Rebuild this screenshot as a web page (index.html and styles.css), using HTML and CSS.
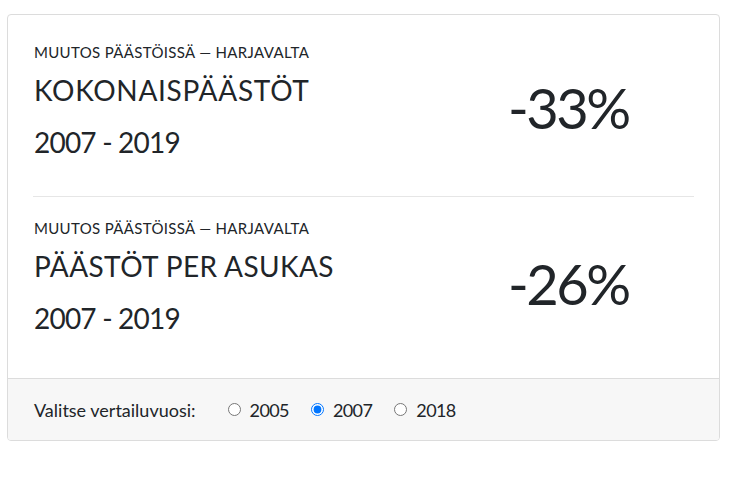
FILE: index.html
```html
<!DOCTYPE html>
<html lang="fi">
<head>
<meta charset="utf-8">
<title>Muutos päästöissä</title>
<link rel="stylesheet" href="styles.css">
</head>
<body>
<div class="page">
  <div class="card">
    <div class="card-body">
      <div class="stat">
        <div class="stat-text">
          <div class="label">MUUTOS PÄÄSTÖISSÄ — HARJAVALTA</div>
          <div class="title">KOKONAISPÄÄSTÖT</div>
          <div class="years">2007 - 2019</div>
        </div>
        <div class="value">-33%</div>
      </div>
      <div class="stat">
        <div class="stat-text">
          <div class="label">MUUTOS PÄÄSTÖISSÄ — HARJAVALTA</div>
          <div class="title">PÄÄSTÖT PER ASUKAS</div>
          <div class="years">2007 - 2019</div>
        </div>
        <div class="value">-26%</div>
      </div>
    </div>
    <div class="card-footer">
      <span class="footer-label">Valitse vertailuvuosi:</span>
      <label class="opt"><input type="radio" name="year" value="2005"> 2005</label>
      <label class="opt"><input type="radio" name="year" value="2007" checked> 2007</label>
      <label class="opt"><input type="radio" name="year" value="2018"> 2018</label>
    </div>
  </div>
</div>
</body>
</html>
```
FILE: styles.css
```css
html, body {
  margin: 0;
  padding: 0;
  background: #fff;
}
body {
  font-family: "Lato", "Open Sans", sans-serif;
  color: #212529;
}
.page {
  padding: 14px 24px 0 7px;
}
.card {
  width: 711px;
  border: 1px solid #dcdcdc;
  border-radius: 4px;
  overflow: hidden;
  background: #fff;
}
.card-body {
  padding: 6px 25px;
}
.stat {
  padding: 22px 0 37px;
  display: grid;
  grid-template-columns: 1fr 186px;
  align-items: center;
}
.stat + .stat {
  border-top: 1px solid #e6e6e6;
}
.stat-text {
  padding-left: 1px;
}
.label {
  font-size: 15px;
  line-height: 18px;
  letter-spacing: 0.33px;
}
.title {
  font-size: 28px;
  line-height: 34px;
  margin-top: 12px;
  letter-spacing: 0.7px;
}
.stat + .stat .title {
  letter-spacing: 0.4px;
}
.years {
  font-size: 28px;
  line-height: 34px;
  margin-top: 18px;
  letter-spacing: -0.8px;
}
.value {
  font-size: 56px;
  line-height: 64px;
  letter-spacing: -2.5px;
  margin-top: 13px;
}
.card-footer {
  height: 62px;
  box-sizing: border-box;
  background: #f7f7f7;
  border-top: 1px solid #dcdcdc;
  padding: 0 26px;
  display: flex;
  align-items: center;
  font-size: 18px;
}
.footer-label {
  margin-right: 32px;
}
.opt {
  display: flex;
  align-items: center;
  margin-right: 22px;
  letter-spacing: -0.6px;
}
.opt input {
  margin: 0 9px 0 0;
  width: 13px;
  height: 13px;
}
```
